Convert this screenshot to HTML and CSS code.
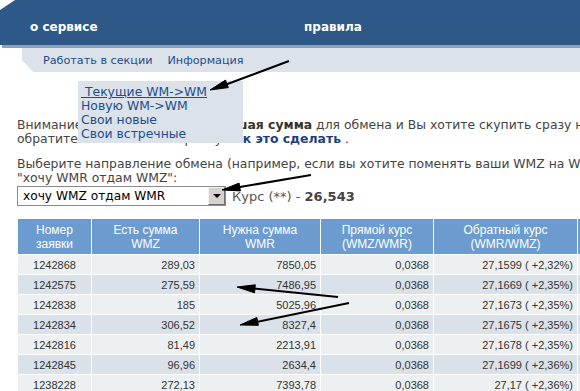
FILE: index.html
```html
<!DOCTYPE html>
<html lang="ru">
<head>
  <meta charset="UTF-8" />
  <title>Обмен WM->WM</title>
  <link rel="stylesheet" href="styles.css">
</head>
<body>
  <div class="top">
    <div class="topbar">
      <a class="top-link">о сервисе</a>
      <a class="top-link">правила</a>
    </div>
    <div class="topline"></div>
    <div class="submenu">
      <a>Работать в секции</a>
      <a>Информация</a>
    </div>
  </div>

  <ul class="dropdown">
    <li><a class="current">&nbsp;Текущие WM-&gt;WM</a></li>
    <li><a>Новую WM-&gt;WM</a></li>
    <li><a>Свои новые</a></li>
    <li><a>Свои встречные</a></li>
  </ul>

  <div class="content">
    <p class="note">
      Внимание! Если вам нужна <b>большая сумма</b> для обмена и Вы хотите скупить сразу несколько заявок,<br>
      обратите внимание на справку <a class="strong-link">как это сделать</a> .
    </p>

    <p class="direction">
      Выберите направление обмена (например, если вы хотите поменять ваши WMZ на WMR, выберите<br>
      "хочу WMR отдам WMZ":
    </p>

    <div class="pick">
      <div class="select">
        <span>хочу WMZ отдам WMR</span>
        <span class="select-btn"></span>
      </div>
      <span class="rate">Курс (**) - <b>26,543</b></span>
    </div>

    <table class="orders">
      <thead>
        <tr>
          <th class="c1">Номер<br>заявки</th>
          <th class="c2">Есть сумма<br>WMZ</th>
          <th class="c3">Нужна сумма<br>WMR</th>
          <th class="c4">Прямой курс<br>(WMZ/WMR)</th>
          <th class="c5">Обратный курс<br>(WMR/WMZ)</th>
          <th class="c6">Дата</th>
        </tr>
      </thead>
      <tbody>
        <tr><td>1242868</td><td>289,03</td><td>7850,05</td><td>0,0368</td><td>27,1599 ( +2,32%)</td><td></td></tr>
        <tr><td>1242575</td><td>275,59</td><td>7486,95</td><td>0,0368</td><td>27,1669 ( +2,35%)</td><td></td></tr>
        <tr><td>1242838</td><td>185</td><td>5025,96</td><td>0,0368</td><td>27,1673 ( +2,35%)</td><td></td></tr>
        <tr><td>1242834</td><td>306,52</td><td>8327,4</td><td>0,0368</td><td>27,1675 ( +2,35%)</td><td></td></tr>
        <tr><td>1242816</td><td>81,49</td><td>2213,91</td><td>0,0368</td><td>27,1678 ( +2,35%)</td><td></td></tr>
        <tr><td>1242845</td><td>96,96</td><td>2634,4</td><td>0,0368</td><td>27,1699 ( +2,36%)</td><td></td></tr>
        <tr><td>1238228</td><td>272,13</td><td>7393,78</td><td>0,0368</td><td>27,17 ( +2,36%)</td><td></td></tr>
      </tbody>
    </table>
  </div>

  <!-- стрелки-пометки поверх скриншота -->
  <svg class="marks" width="580" height="391" viewBox="0 0 580 391">
    <g stroke="#000" stroke-width="2" fill="#000">
      <line x1="289" y1="61" x2="222" y2="86" />
      <polygon points="210,90 228.3,87.6 225.5,80.1" stroke-width="1" />
      <line x1="311" y1="175" x2="234" y2="188" />
      <polygon points="222,190 240.4,190.9 239.1,183.1" stroke-width="1" />
      <line x1="338" y1="297" x2="250" y2="288" />
      <polygon points="237,287 254.5,292.8 255.3,284.8" stroke-width="1" />
      <line x1="349" y1="303" x2="252" y2="323" />
      <polygon points="240,325 258.4,325.3 256.8,317.5" stroke-width="1" />
    </g>
  </svg>
</body>
</html>
```

FILE: styles.css
```css
body {
  margin: 0;
  font-family: "DejaVu Sans", Verdana, sans-serif;
  font-size: 12px;
  color: #444;
  background: #fff;
  position: relative;
  width: 580px;
  height: 391px;
  overflow: hidden;
}

a {
  text-decoration: none;
  cursor: pointer;
}

.topbar {
  box-sizing: border-box;
  height: 45px;
  padding: 9px 0 0 30px;
  background: #2d5887;
  display: flex;
  align-items: center;
  clip-path: polygon(15px 0, 100% 0, 100% 100%, 0 100%, 0 10px);
}

.top-link {
  width: 274px;
  color: #fff;
  font-weight: bold;
  font-size: 12px;
}

.topline {
  height: 3px;
  margin-left: 2px;
  background: #8ea2b6;
}

.submenu {
  box-sizing: border-box;
  height: 24px;
  margin-left: 22px;
  padding-left: 21px;
  background: #dce2ea;
  display: flex;
  align-items: center;
  gap: 15px;
  font-size: 11.2px;
  clip-path: polygon(0 0, 100% 0, 100% 100%, 11px 100%, 0 12px);
}

.submenu a {
  color: #1c4d8f;
}

.dropdown {
  position: absolute;
  left: 78px;
  top: 81px;
  box-sizing: border-box;
  width: 165px;
  height: 62px;
  margin: 0;
  padding: 4px 0 0 3px;
  list-style: none;
  background: #dce2ea;
  font-size: 12.4px;
  z-index: 2;
}

.dropdown li {
  line-height: 14px;
}

.dropdown a {
  color: #1c4d8f;
}

.dropdown a.current {
  text-decoration: underline;
}

.content {
  width: 900px;
  padding: 46px 0 0 17px;
  font-size: 12.4px;
}

.note,
.direction {
  margin: 0;
  line-height: 14px;
  white-space: nowrap;
}

.note b {
  color: #333;
}

.strong-link {
  color: #1b3f7a;
  font-weight: bold;
}

.direction {
  margin-top: 11px;
}

.pick {
  margin-top: 1px;
  display: flex;
  align-items: center;
}

.select {
  box-sizing: border-box;
  width: 209px;
  height: 20px;
  border: 1px solid #8c8c8c;
  display: flex;
  align-items: center;
  justify-content: space-between;
  padding-left: 5px;
  font-size: 12.2px;
  color: #000;
}

.select-btn {
  box-sizing: border-box;
  width: 17px;
  height: 18px;
  background: #d6d3ce;
  border: 1px solid;
  border-color: #f4f4f4 #6e6e6e #6e6e6e #f4f4f4;
  position: relative;
}

.select-btn::after {
  content: "";
  position: absolute;
  left: 4px;
  top: 6px;
  border-left: 4px solid transparent;
  border-right: 4px solid transparent;
  border-top: 4px solid #000;
}

.rate {
  margin-left: 6px;
  font-size: 13px;
  color: #555;
}

.rate b {
  color: #444;
}

.orders {
  margin-top: 12px;
  border-collapse: separate;
  border-spacing: 1px;
  table-layout: fixed;
  width: 662px;
  font-family: "Liberation Sans", Arial, sans-serif;
}

.orders th {
  height: 35px;
  padding: 0;
  background: #6b9bcf;
  color: #fff;
  font-weight: normal;
  font-size: 12px;
  line-height: 14px;
}

.c1 { width: 73px; }
.c2 { width: 107px; }
.c3 { width: 120px; }
.c4 { width: 112px; }
.c5 { width: 143px; }
.c6 { width: 100px; }

.orders td {
  height: 19px;
  padding: 0 4px;
  font-size: 11px;
  color: #333;
  text-align: right;
  white-space: nowrap;
}

.orders td:first-child {
  text-align: center;
}

.orders tbody tr:nth-child(odd) td {
  background: #edf0f1;
}

.orders tbody tr:nth-child(even) td {
  background: #dae1e9;
}

.marks {
  position: absolute;
  left: 0;
  top: 0;
  pointer-events: none;
  z-index: 3;
}
```
